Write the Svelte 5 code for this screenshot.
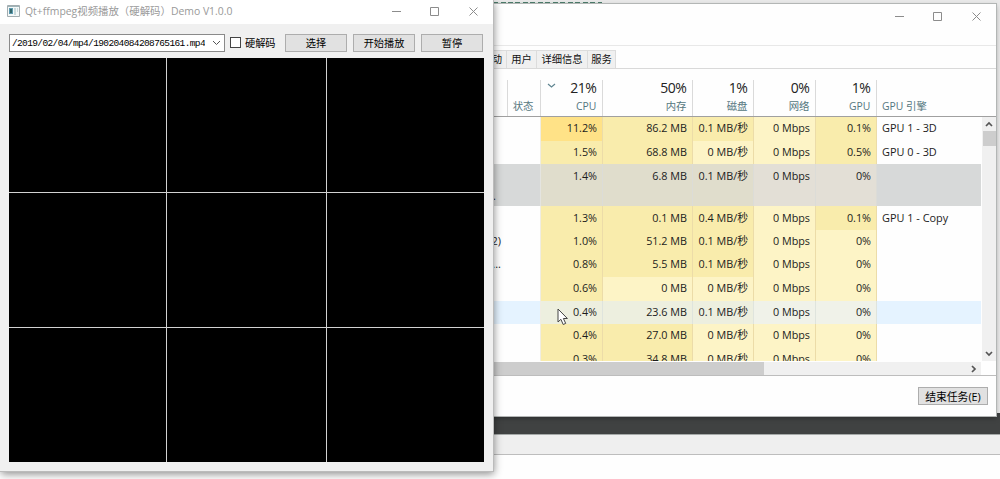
<script>
  const heads = [
    { pct: '21%', name: 'CPU', sorted: true },
    { pct: '50%', name: '内存' },
    { pct: '1%', name: '磁盘' },
    { pct: '0%', name: '网络' },
    { pct: '1%', name: 'GPU' }
  ];
  // Each heat digit selects the tint of the matching value cell.
  const rows = [
    { h: 24, tail: '', heat: '32212', v: ['11.2%', '86.2 MB', '0.1 MB/秒', '0 Mbps', '0.1%'], engine: 'GPU 1 - 3D' },
    { h: 23, tail: '', heat: '22112', v: ['1.5%', '68.8 MB', '0 MB/秒', '0 Mbps', '0.5%'], engine: 'GPU 0 - 3D' },
    { h: 42, tail: '.', heat: '22211', v: ['1.4%', '6.8 MB', '0.1 MB/秒', '0 Mbps', '0%'], engine: '', state: 'selected' },
    { h: 24, tail: '', heat: '22212', v: ['1.3%', '0.1 MB', '0.4 MB/秒', '0 Mbps', '0.1%'], engine: 'GPU 1 - Copy' },
    { h: 23, tail: '2)', heat: '22211', v: ['1.0%', '51.2 MB', '0.1 MB/秒', '0 Mbps', '0%'], engine: '' },
    { h: 24, tail: '...', heat: '22211', v: ['0.8%', '5.5 MB', '0.1 MB/秒', '0 Mbps', '0%'], engine: '' },
    { h: 24, tail: '', heat: '21111', v: ['0.6%', '0 MB', '0 MB/秒', '0 Mbps', '0%'], engine: '' },
    { h: 23, tail: '', heat: '22211', v: ['0.4%', '23.6 MB', '0.1 MB/秒', '0 Mbps', '0%'], engine: '', state: 'hover' },
    { h: 24, tail: '', heat: '22111', v: ['0.4%', '27.0 MB', '0 MB/秒', '0 Mbps', '0%'], engine: '' },
    { h: 24, tail: '', heat: '22111', v: ['0.3%', '34.8 MB', '0 MB/秒', '0 Mbps', '0%'], engine: '' }
  ];
</script>

{#snippet controls()}
  <svg class="controls" width="88" height="12" viewBox="0 0 88 12" fill="none" stroke="#8c8c8c">
    <path d="M0 6.5h9M38.5 2.5h8v8h-8zM77.5 2.5l8 8M85.5 2.5l-8 8" />
  </svg>
{/snippet}

<div class="desktop">
  <div class="backdrop">
    <div class="top"><div class="dashes"></div></div>
    <div class="dark"></div>
    <div class="strip"></div>
    <div class="blank"></div>
  </div>

  <div class="window manager">
    <div class="caption">{@render controls()}</div>
    <div class="tabs">
      <span class="tab first">启动</span><span class="tab user">用户</span><span class="tab detail">详细信息</span><span class="tab service">服务</span>
    </div>
    <div class="thead cols">
      <div class="hcell"></div>
      <div class="hcell status"><small>状态</small></div>
      {#each heads as h}
        <div class="hcell">
          {#if h.sorted}
            <svg class="sort" width="9" height="6" viewBox="0 0 9 6" fill="none" stroke="#5f8490" stroke-width="1.2"><path d="M1 1l3.5 3L8 1" /></svg>
          {/if}
          <b>{h.pct}</b><small>{h.name}</small>
        </div>
      {/each}
      <div class="hcell engine"><small>GPU 引擎</small></div>
    </div>
    <div class="view">
      <div class="tbody">
        {#each rows as r}
          <div class="row cols {r.state ?? ''}" style="height: {r.h}px">
            <div class="name">{r.tail}</div>
            <div class="state"></div>
            {#each r.v as v, i}
              <div class="val heat{r.heat[i]}">{v}</div>
            {/each}
            <div class="eng">{r.engine}</div>
          </div>
        {/each}
      </div>
      <div class="vscroll">
        <svg width="8" height="6" viewBox="0 0 8 6" fill="none" stroke="#555" stroke-width="1.7"><path d="M1 5l3-3 3 3" /></svg>
        <div class="thumb"></div>
        <svg width="8" height="6" viewBox="0 0 8 6" fill="none" stroke="#555" stroke-width="1.7"><path d="M1 1l3 3 3-3" /></svg>
      </div>
    </div>
    <div class="hscroll">
      <div class="hthumb"></div>
      <svg width="6" height="8" viewBox="0 0 6 8" fill="none" stroke="#555" stroke-width="1.7"><path d="M1 1l3 3-3 3" /></svg>
    </div>
    <div class="foot"><button class="end">结束任务(E)</button></div>
  </div>

  <div class="window player">
    <div class="titlebar">
      <svg class="logo" width="13" height="12" viewBox="0 0 13 12">
        <path fill="#f4f8f8" stroke="#a3adb0" d="M.5.5h12v11H.5z" />
        <path fill="#9fb3b8" d="M1 1h11v1H1z" />
        <path fill="#5c9ab0" d="M2 3h4v6H2z" />
        <path fill="#35676a" d="M3 4h2v4H3z" />
        <path fill="#c9dadc" d="M7 3h2v7H7zM10 3h1v4h-1z" />
      </svg>
      <span class="title">Qt+ffmpeg视频播放（硬解码）Demo V1.0.0</span>
      {@render controls()}
    </div>
    <div class="toolbar">
      <div class="combo">
        <span class="path"><span>./2019/02/04/mp4/190204084208765161.mp4</span></span>
        <svg width="9" height="6" viewBox="0 0 9 6" fill="none" stroke="#555"><path d="M1 1l3.5 3.5L8 1" /></svg>
      </div>
      <span class="box"></span>
      <span class="label">硬解码</span>
      <button>选择</button>
      <button>开始播放</button>
      <button>暂停</button>
    </div>
    <div class="screens">
      {#each Array(9) as _}<div></div>{/each}
    </div>
  </div>

  <svg class="pointer" width="12" height="18" viewBox="0 0 12 18">
    <path fill="#fff" stroke="#444" d="M1 1v13l2.9-2.7 2.3 5.2 2.5-1.1-2.3-4.9h4z" />
  </svg>
</div>

<style>
  :global(body) { background: #fff; }
  * { box-sizing: border-box; }
  .desktop {
    position: relative; width: 1000px; height: 479px; overflow: hidden;
    font: 11px/14px "Open Sans", "Noto Sans CJK SC", sans-serif; color: #222;
  }
  .backdrop { height: 479px; display: flex; flex-direction: column; }
  .top { height: 413px; background: #e9e9e9; padding: 2px 0 0 493px; }
  .dashes { width: 109px; height: 1px; background: repeating-linear-gradient(90deg, #4d7d6b 0 5px, #dce5e0 5px 7.5px); }
  .dark { height: 21px; background: #404242; }
  .strip { height: 21px; background: #efefef; border-top: 1px solid #a5a9a8; border-bottom: 1px solid #bdbdbd; }
  .blank { flex: 1; background: #fefefe; }

  .window { position: absolute; display: flex; flex-direction: column; }
  .manager {
    left: 440px; top: 4px; width: 556px; height: 412px; background: #fefefe;
    box-shadow: 0 0 0 1px #b3b6b5, 0 2px 5px rgba(0, 0, 0, .35);
  }
  .caption { height: 42px; border-bottom: 1px solid #e8e8e8; display: flex; justify-content: flex-end; padding: 6px 13px 0 0; }
  .controls { flex: none; }
  .tabs { height: 23px; padding-top: 4px; border-bottom: 1px solid #d9d9d9; display: flex; }
  .tab {
    height: 18px; background: #f0f0f0; border: 1px solid #dcdcdc; border-left: 0; border-bottom: 0;
    font-size: 10.3px; line-height: 17px; text-align: center; color: #111; white-space: nowrap;
  }
  .first { width: 67px; text-align: right; padding-right: 4px; }
  .user { width: 30px; }
  .detail { width: 51px; }
  .service { width: 28px; }
  .cols { display: grid; grid-template-columns: 68px 33px 62px 90px 61px 62px 61px 1fr; }
  .thead { height: 48px; padding-top: 11px; border-bottom: 1px solid #a0a0a0; }
  .hcell {
    position: relative; height: 36px; display: flex; flex-direction: column; align-items: flex-end;
    padding-right: 5px; border-right: 1px solid #dadada;
  }
  .hcell b { font-weight: 400; font-size: 14px; line-height: 16px; letter-spacing: -.5px; color: #222; margin-right: 0.6px; }
  .hcell small { font-size: 10.4px; line-height: 14px; color: #557780; margin-top: 3px; margin-right: .6px; }
  .status { padding-right: 6px; }
  .status small, .engine small { margin-top: 19px; }
  .engine { align-items: flex-start; padding-left: 5px; border: 0; }
  .sort { position: absolute; left: 6px; top: 3px; }
  .view { display: flex; height: 244px; }
  .tbody { width: 541px; height: 244px; overflow: hidden; }
  .row { line-height: 14px; color: #1c1c1c; white-space: nowrap; }
  .row > div { padding-top: 4px; overflow: hidden; }
  .row .name { text-align: right; padding-right: 7px; }
  .row.selected .name { padding: 25px 12px 0 0; }
  .state { border-right: 1px solid #f0ede2; }
  .val {
    text-align: right; padding-right: 5px; font-size: 10.8px;
    border-right: 1px solid #ecdca8;
  }
  .heat1 { background: #fdf4c6; }
  .heat2 { background: #f9ecac; }
  .heat3 { background: #ffe287; }
  .eng { padding-left: 5px; font-size: 10.9px; }
  .selected { background: #d7d9d9; }
  .selected > .state { border-color: #e4e4e0; }
  .selected > .heat2 { background: #e0ddcc; border-color: #dcdcd7; }
  .selected > .heat1 { background: #e3dfd6; border-color: #dcdcd7; }
  .row.selected > .val, .row:nth-child(4) > .val, .row:nth-child(4) > .eng { padding-top: 5px; }
  .hover { background: #e5f3ff; }
  .hover > .heat2 { background: #edefdf; border-color: #dfe4dd; }
  .hover > .heat1 { background: #f0f2e9; border-color: #dfe4dd; }
  .vscroll {
    width: 14px; margin-left: 1px; background: #f0f0f0; display: flex; flex-direction: column;
    align-items: center; padding: 4px 0;
  }
  .thumb { width: 13px; height: 15px; background: #cdcdcd; margin: 4px 0 auto; }
  .hscroll {
    margin-top: 1px; width: 541px; height: 13px; background: #f0f0f0; display: flex;
    align-items: center; justify-content: space-between; padding-right: 4px;
  }
  .hthumb { width: 324px; height: 13px; background: #cdcdcd; }
  .foot { flex: 1; border-top: 1px solid #bdbdbd; padding: 11px 8px 0; display: flex; justify-content: flex-end; align-items: flex-start; }
  button {
    width: 62px; height: 18px; padding: 0; border: 1px solid #adadad; background: #e1e1e1; color: #000;
    font: 10.2px/15px "Open Sans", "Noto Sans CJK SC", sans-serif; white-space: nowrap;
  }
  .foot .end { width: 70px; font-size: 10.8px; }

  .player {
    left: 0; top: 0; width: 493px; height: 471px; background: #f0f0f0;
    box-shadow: 0 0 0 1px #bbb, 1px 3px 8px rgba(0, 0, 0, .45);
  }
  .titlebar { height: 24px; background: #fff; display: flex; align-items: center; padding: 0 13px 2px 7px; }
  .title { margin-left: 5px; flex: 1; font-size: 10.42px; color: #999; white-space: nowrap; }
  .toolbar { display: flex; height: 34px; padding: 10px 9px 0; }
  .combo {
    width: 216px; height: 18px; background: #fff; border: 1px solid #8a8a8a; display: flex;
    align-items: center; padding: 0 3px 0 1px; justify-content: space-between;
  }
  .path {
    width: 194px; overflow: hidden; display: flex; justify-content: flex-end;
    font: 9.5px/14px "Liberation Mono", monospace; letter-spacing: -.62px; color: #000; white-space: nowrap;
  }
  .path span { padding-top: 1px; }
  .box { width: 11px; height: 11px; margin: 3px 0 0 5px; background: #fff; border: 1px solid #444; }
  .label { margin-left: 4px; width: 40px; font-size: 10.2px; line-height: 18px; color: #000; white-space: nowrap; }
  .toolbar button + button { margin-left: 6px; }
  .screens {
    margin: 0 9px; width: 475px; height: 404px; background: #d2d2d2; display: grid; gap: 1px;
    grid-template: 134px 134px 134px / 157px 159px 157px;
  }
  .screens div { background: #000; }
  .pointer { position: absolute; left: 557px; top: 308px; }
</style>
